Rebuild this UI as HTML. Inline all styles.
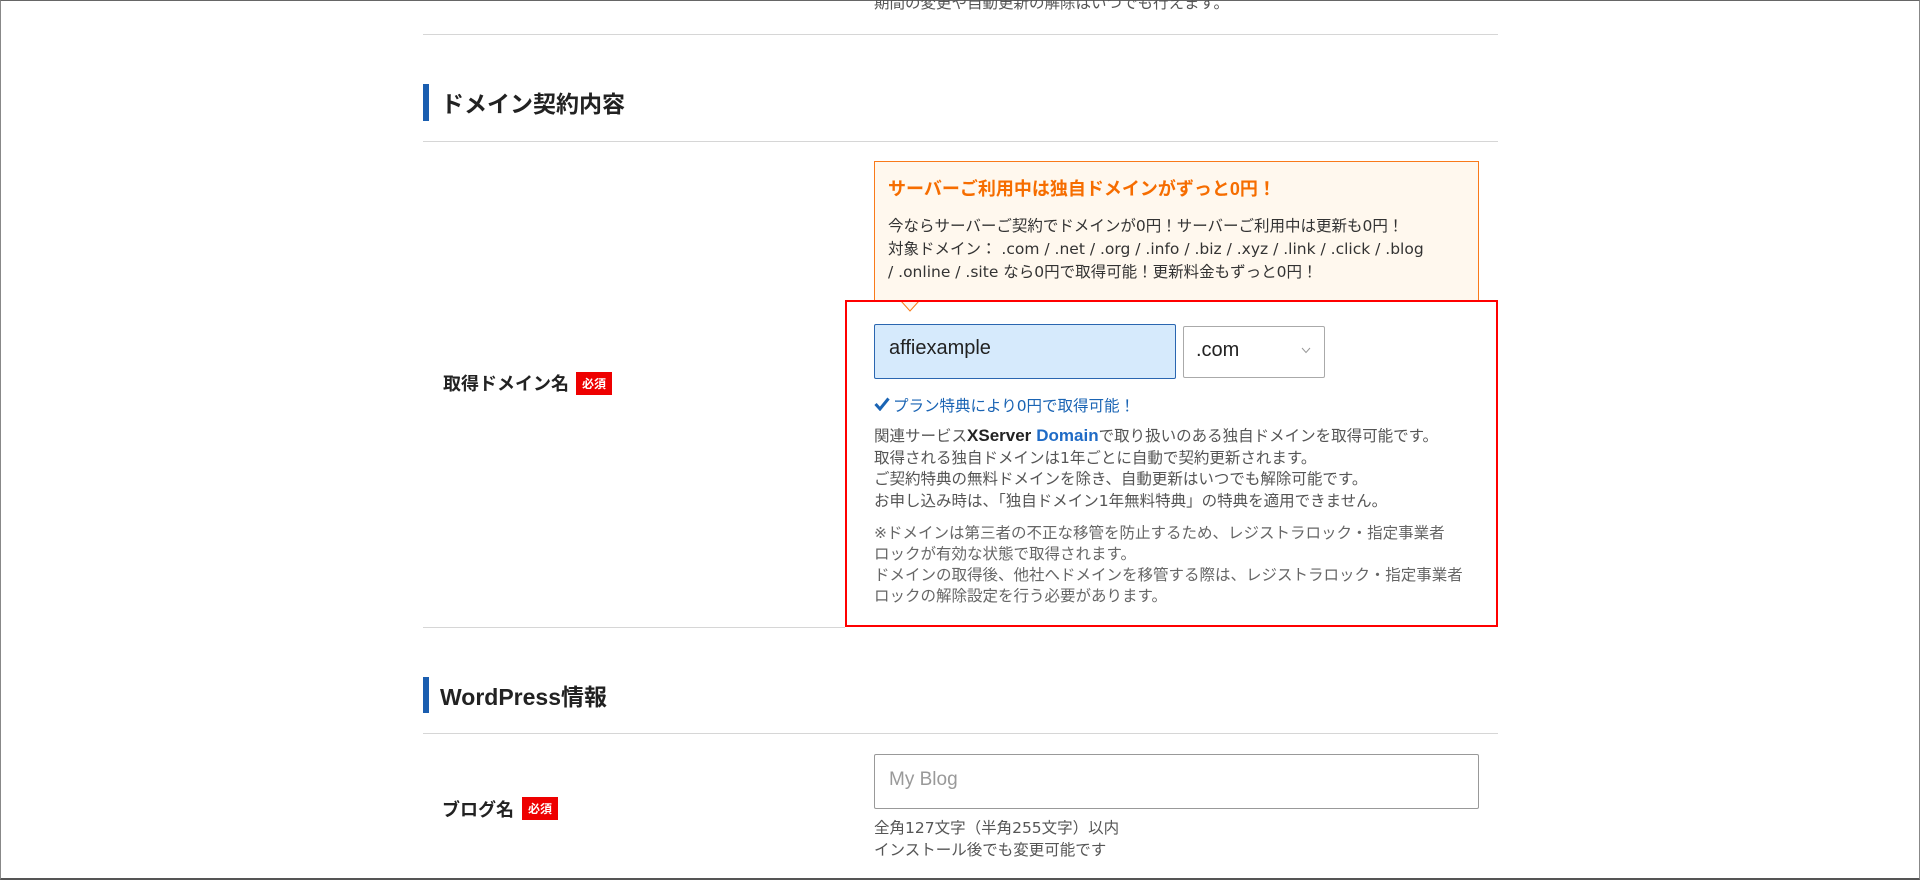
<!DOCTYPE html>
<html><head><meta charset="utf-8"><style>
*{margin:0;padding:0;box-sizing:border-box}
html,body{width:1920px;height:880px;overflow:hidden;background:#fff}
body{position:relative;font-family:"DejaVu Sans","Noto Sans CJK JP",sans-serif;color:#333;border:1px solid #888;border-top:1px solid #666;border-bottom:2px solid #555}
.a{position:absolute;white-space:nowrap}
.hr{position:absolute;height:1px;background:#d6d6d6}
.bar{position:absolute;width:6px;background:#1a5eb0}
.h{font-size:23px;font-weight:bold;color:#222;font-family:"Liberation Sans","Noto Sans CJK JP",sans-serif}
.lbl{font-size:18px;font-weight:bold;color:#222;font-family:"Liberation Sans","Noto Sans CJK JP",sans-serif}
.badge{position:absolute;background:#e00;color:#fff;font-size:12px;font-weight:bold;text-align:center;line-height:23px;font-family:"Noto Sans CJK JP",sans-serif}
.p{font-size:15.5px;color:#555}
</style></head><body>
<div class="a p" style="left:873px;top:-10px;font-size:15.5px">期間の変更や自動更新の解除はいつでも行えます。</div>
<div class="hr" style="left:422px;width:1075px;top:33px"></div>
<div class="bar" style="left:422px;top:83px;height:37px"></div>
<div class="a h" style="left:440px;top:84px">ドメイン契約内容</div>
<div class="hr" style="left:422px;width:1075px;top:140px"></div>

<div class="a" style="left:873px;top:160px;width:605px;height:141px;border:1px solid #f97a1a;background:#fff8ee"></div>
<div class="a" style="left:887px;top:174px;font-size:18px;font-weight:bold;color:#f66d00;font-family:'Liberation Sans','Noto Sans CJK JP',sans-serif">サーバーご利用中は独自ドメインがずっと0円！</div>
<div class="a" style="left:887px;top:214px;font-size:15.5px;line-height:23px;color:#333">今ならサーバーご契約でドメインが0円！サーバーご利用中は更新も0円！<br>対象ドメイン： .com / .net / .org / .info / .biz / .xyz / .link / .click / .blog<br>/ .online / .site なら0円で取得可能！更新料金もずっと0円！</div>
<svg class="a" style="left:899px;top:299px" width="20" height="12"><path d="M1 1 L10 11 L19 1" fill="#fff8ee" stroke="#f97a1a" stroke-width="1"/></svg>

<div class="a" style="left:844px;top:299px;width:653px;height:327px;border:2px solid #f00"></div>
<div class="a" style="left:873px;top:323px;width:302px;height:55px;background:#d6eafc;border:1px solid #2a66b0;border-radius:2px"></div>
<div class="a" style="left:888px;top:336px;font-size:20px;color:#222;font-family:'Liberation Sans',sans-serif">affiexample</div>
<div class="a" style="left:1182px;top:325px;width:142px;height:52px;border:1px solid #aaa;border-radius:2px;background:#fff"></div>
<div class="a" style="left:1195px;top:338px;font-size:20px;color:#222;font-family:'Liberation Sans',sans-serif">.com</div>
<svg class="a" style="left:1300px;top:346px" width="10" height="7"><path d="M1 1 L5 5.5 L9 1" fill="none" stroke="#999" stroke-width="1"/></svg>
<svg class="a" style="left:873px;top:396px" width="16" height="14"><path d="M1.5 7 L6 12 L14.5 1.5" fill="none" stroke="#1a64b4" stroke-width="3"/></svg>
<div class="a" style="left:892px;top:393px;font-size:15.5px;color:#1a64b4">プラン特典により0円で取得可能！</div>
<div class="a p" style="left:873px;top:424px;line-height:21.5px">関連サービス<b style="font-size:17px;color:#222;font-family:'Liberation Sans',sans-serif">XServer</b> <b style="font-size:17px;color:#1f6bc6;font-family:'Liberation Sans',sans-serif">Domain</b>で取り扱いのある独自ドメインを取得可能です。<br>取得される独自ドメインは1年ごとに自動で契約更新されます。<br>ご契約特典の無料ドメインを除き、自動更新はいつでも解除可能です。<br>お申し込み時は、「独自ドメイン1年無料特典」の特典を適用できません。</div>
<div class="a p" style="left:873px;top:522px;line-height:21px;color:#666">※ドメインは第三者の不正な移管を防止するため、レジストラロック・指定事業者<br>ロックが有効な状態で取得されます。<br>ドメインの取得後、他社へドメインを移管する際は、レジストラロック・指定事業者<br>ロックの解除設定を行う必要があります。</div>
<div class="a lbl" style="left:442px;top:369px">取得ドメイン名</div>
<div class="badge" style="left:575px;top:371px;width:36px">必須</div>
<div class="hr" style="left:422px;width:422px;top:626px"></div>

<div class="bar" style="left:422px;top:676px;height:36px"></div>
<div class="a h" style="left:439px;top:677px">WordPress情報</div>
<div class="hr" style="left:422px;width:1075px;top:732px"></div>
<div class="a" style="left:873px;top:753px;width:605px;height:55px;border:1px solid #999;border-radius:2px"></div>
<div class="a" style="left:888px;top:768px;font-size:19px;color:#999;font-family:'Liberation Sans',sans-serif">My Blog</div>
<div class="a lbl" style="left:441px;top:795px">ブログ名</div>
<div class="badge" style="left:521px;top:796px;width:36px">必須</div>
<div class="a p" style="left:873px;top:817px;line-height:21.5px">全角127文字（半角255文字）以内<br>インストール後でも変更可能です</div>
</body></html>
